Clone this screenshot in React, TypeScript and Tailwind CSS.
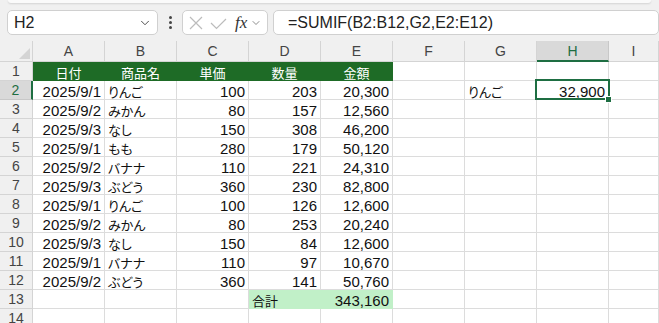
import React from 'react';
import { ChevronDown } from 'lucide-react';

type CellData = { t?: string; r?: boolean; jp?: boolean; bg?: string };

const cols = ['A', 'B', 'C', 'D', 'E', 'F', 'G', 'H', 'I'];

const records: [string, string, string, string, string][] = [
  ['2025/9/1', 'りんご', '100', '203', '20,300'],
  ['2025/9/2', 'みかん', '80', '157', '12,560'],
  ['2025/9/3', 'なし', '150', '308', '46,200'],
  ['2025/9/1', 'もも', '280', '179', '50,120'],
  ['2025/9/2', 'バナナ', '110', '221', '24,310'],
  ['2025/9/3', 'ぶどう', '360', '230', '82,800'],
  ['2025/9/1', 'りんご', '100', '126', '12,600'],
  ['2025/9/2', 'みかん', '80', '253', '20,240'],
  ['2025/9/3', 'なし', '150', '84', '12,600'],
  ['2025/9/1', 'バナナ', '110', '97', '10,670'],
  ['2025/9/2', 'ぶどう', '360', '141', '50,760'],
];

const font = "font-['Liberation_Sans','Noto_Sans_CJK_JP',sans-serif]";

const Cell = ({ c, last, selected }: { c: CellData; last?: boolean; selected?: boolean }) => {
  const filled = c.bg === 'green' ? 'bg-[#1e6b26] border-[#1e6b26] text-white justify-center' : c.bg === 'total' ? 'bg-[#c1f0c8] border-[#c1f0c8]' : 'border-[#dcdcdc]';
  return (
    <div
      className={`relative h-[19px] shrink-0 flex items-center px-[3px] pt-[2px] border-r border-b ${last ? 'flex-1' : 'w-[72px]'} ${filled} ${c.r ? 'justify-end' : ''}`}
    >
      {c.t && (
        <span className={c.jp ? "text-[13px] font-['Noto_Sans_CJK_JP',sans-serif] [font-feature-settings:'palt'] leading-none" : 'text-[15px] leading-none'}>
          {c.t}
        </span>
      )}
      {selected && (
        <>
          <div className="absolute z-10 -left-[2px] -top-[2px] -right-[2px] -bottom-[1px] border-2 border-[#1e6e42] pointer-events-none" />
          <div className="absolute z-10 -right-[4px] -bottom-[4px] w-[7px] h-[7px] bg-[#1e6e42] border border-white" />
        </>
      )}
    </div>
  );
};

const App = () => {
  const rows: CellData[][] = [];
  rows.push([
    { t: '日付', jp: true, bg: 'green' },
    { t: '商品名', jp: true, bg: 'green' },
    { t: '単価', jp: true, bg: 'green' },
    { t: '数量', jp: true, bg: 'green' },
    { t: '金額', jp: true, bg: 'green' },
    {}, {}, {}, {},
  ]);
  records.forEach((rec, i) => {
    rows.push([
      { t: rec[0], r: true },
      { t: rec[1], jp: true },
      { t: rec[2], r: true },
      { t: rec[3], r: true },
      { t: rec[4], r: true },
      {},
      i === 0 ? { t: 'りんご', jp: true } : {},
      i === 0 ? { t: '32,900', r: true } : {},
      {},
    ]);
  });
  rows.push([{}, {}, {}, { t: '合計', jp: true, bg: 'total' }, { t: '343,160', r: true, bg: 'total' }, {}, {}, {}, {}]);
  rows.push([{}, {}, {}, {}, {}, {}, {}, {}, {}]);

  return (
    <div className={`w-[659px] h-[323px] overflow-hidden bg-white text-[#111] ${font}`}>
      {/* Formula bar */}
      <div className="relative h-[41px] bg-[#f0f0f0] flex items-start pt-[10px] pl-[7px] gap-[4px]">
        <div className="absolute top-0 left-[8px] right-[8px] h-[3px] bg-[#fafafa] rounded-b-[4px] shadow-[0_1px_2px_rgba(0,0,0,0.12)]" />
        <div className="w-[151px] h-[25px] bg-white border border-[#d0d0d0] rounded-[5px] flex items-center pl-[6px] pr-[5px]">
          <span className="flex-1 text-[16px] text-[#222]">H2</span>
          <ChevronDown size={14} strokeWidth={1.6} className="text-[#444]" />
        </div>
        <div className="w-[16px] h-[25px] flex flex-col items-center justify-center gap-[2px]">
          <div className="w-[3px] h-[3px] bg-[#444] rounded-full" />
          <div className="w-[3px] h-[3px] bg-[#444] rounded-full" />
          <div className="w-[3px] h-[3px] bg-[#444] rounded-full" />
        </div>
        <div className="w-[86px] h-[25px] bg-white border border-[#d0d0d0] rounded-[5px] flex items-center pl-[6px]">
          <svg width="14" height="14" viewBox="0 0 14 14" className="shrink-0">
            <path d="M1 1 L13 13 M13 1 L1 13" stroke="#bcbcbc" strokeWidth="1.2" fill="none" />
          </svg>
          <svg width="17" height="12" viewBox="0 0 17 12" className="ml-[7px] mt-[3px] shrink-0">
            <path d="M1 5 L6.5 10.5 L16 1" stroke="#bcbcbc" strokeWidth="1.2" fill="none" />
          </svg>
          <span className="ml-[8px] text-[17px] italic font-['Liberation_Serif',serif] text-[#333] leading-none">fx</span>
          <ChevronDown size={12} strokeWidth={1.5} className="text-[#666] ml-[3px]" />
        </div>
        <div className="ml-[1px] w-[386px] h-[25px] bg-white border border-[#d0d0d0] rounded-[5px] flex items-center pl-[14px]">
          <span className="text-[16px] text-[#222]">=SUMIF(B2:B12,G2,E2:E12)</span>
        </div>
      </div>

      {/* Column headers */}
      <div className="flex h-[21px] bg-[#f0f0f0]">
        <div className="relative w-[33px] shrink-0 border-r border-b border-[#d4d4d4]">
          <div className="absolute right-[2px] bottom-[2px] w-0 h-0 border-l-[11px] border-l-transparent border-b-[11px] border-b-[#d4d4d4]" />
        </div>
        {cols.map((col) => (
          <div
            key={col}
            className={`shrink-0 flex items-center justify-center text-[14px] pt-[1px] border-r ${col === 'I' ? 'flex-1' : 'w-[72px]'} ${col === 'H' ? 'bg-[#d9d9d9] text-[#1e6e42] border-b-2 border-b-[#1e6e42] border-r-[#c8c8c8]' : 'text-[#444] border-b border-[#d4d4d4]'}`}
          >
            {col}
          </div>
        ))}
      </div>

      {/* Rows */}
      {rows.map((row, ri) => (
        <div key={ri} className="flex">
          <div
            className={`w-[33px] h-[19px] shrink-0 flex items-center justify-center pt-[1px] text-[14px] border-b ${ri === 1 ? 'bg-[#d9d9d9] text-[#1e6e42] border-r-2 border-r-[#1e6e42] border-b-[#c8c8c8]' : 'bg-[#f0f0f0] text-[#444] border-r border-[#d4d4d4]'}`}
          >
            {ri + 1}
          </div>
          {row.map((c, ci) => (
            <Cell key={ci} c={c} last={ci === 8} selected={ri === 1 && ci === 7} />
          ))}
        </div>
      ))}
    </div>
  );
};

export default App;
